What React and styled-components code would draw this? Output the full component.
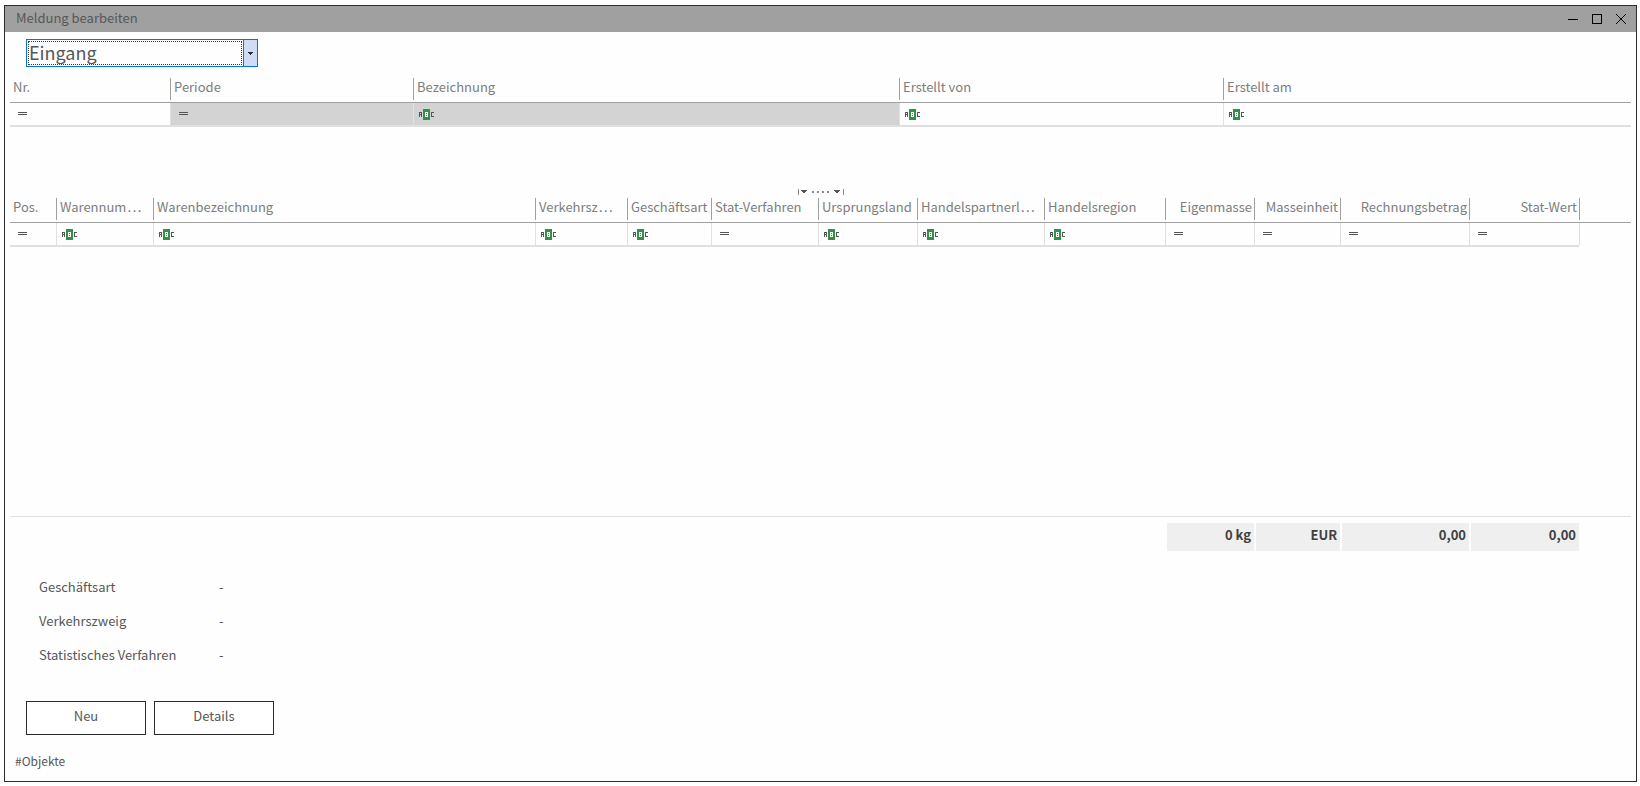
import React, { useState } from 'react';
import styled, { createGlobalStyle } from 'styled-components';

const GlobalStyle = createGlobalStyle`
  * {
    box-sizing: border-box;
  }

  html,
  body,
  #root {
    height: 100%;
    margin: 0;
  }

  body {
    background: #ffffff;
    color: #575757;
    font-family: 'Noto Sans CJK SC', 'Noto Sans', sans-serif;
    font-size: 13px;
    line-height: 20px;
  }
`;

const Screen = styled.div`
  display: flex;
  height: 100%;
  padding: 5px 3px 4px 4px;
`;

const Window = styled.main`
  display: flex;
  flex-direction: column;
  flex: 1;
  min-width: 0;
  border: 1px solid #2b2b30;
  background: #fefefe;
`;

const TitleBar = styled.header`
  display: flex;
  align-items: center;
  justify-content: space-between;
  height: 26px;
  padding: 0 9px 0 11px;
  background: #a0a0a0;
`;

const Title = styled.h1`
  margin: 0;
  padding-bottom: 2px;
  color: #575757;
  font-size: 13px;
  font-weight: 400;
`;

const WindowButtons = styled.div`
  display: flex;
  gap: 12px;
`;

const WindowButton = styled.button`
  display: flex;
  padding: 0;
  border: 0;
  background: none;
  color: #000000;
`;

const Toolbar = styled.div`
  display: flex;
  padding: 7px 21px 11px;
`;

const SelectBox = styled.div`
  display: flex;
  width: 232px;
  height: 28px;
  border: 1px solid #0078d7;
`;

const Select = styled.select`
  flex: 1;
  appearance: none;
  margin: 0;
  padding: 0 16px 2px 2px;
  border: 0;
  border-radius: 0;
  outline: 1px dotted #404040;
  outline-offset: -2px;
  background: transparent;
  color: #575757;
  font-family: inherit;
  font-size: 18px;
  line-height: 24px;
`;

const SelectArrow = styled.span`
  display: flex;
  align-items: center;
  justify-content: center;
  width: 14px;
  border-left: 1px solid #0078d7;
  background: #cfdcf5;
  pointer-events: none;
`;

const Grid = styled.section`
  display: flex;
  flex-direction: column;
  flex: ${({ $grow }) => ($grow ? 1 : 'none')};
  min-height: 0;
  margin: 0 5px;
`;

const Table = styled.table`
  width: 100%;
  table-layout: fixed;
  border-collapse: separate;
  border-spacing: 0;
`;

const HeadCell = styled.th`
  height: 25px;
  padding: 0 0 2px;
  border-bottom: 1px solid #a0a0a0;
  color: #7d7d7d;
  font-weight: 400;
  text-align: ${({ $align }) => $align || 'left'};
`;

const HeadLabel = styled.div`
  height: 22px;
  padding: 0 2px 0 3px;
  border-left: ${({ $first }) => ($first ? 'none' : '1px solid #a0a0a0')};
  line-height: 18px;
  overflow: hidden;
  white-space: nowrap;
`;

// dots on the baseline, the CJK face centres them
const Ellipsis = styled.span`
  font-family: 'Liberation Sans', sans-serif;
  font-size: 16px;
  line-height: 1;
`;

const FilterCell = styled.td`
  height: 24px;
  padding: 0 0 0 ${({ $kind }) => ($kind === 'abc' ? '5px' : '8px')};
  border-left: ${({ $first }) => ($first ? 'none' : '1px solid #e0e0e0')};
  border-bottom: 2px solid #e0e0e0;
  background: ${({ $locked }) => ($locked ? '#d3d3d3' : 'transparent')};
  background-clip: padding-box;

  &:empty {
    padding: 0;
    border-bottom-color: transparent;
  }

  svg {
    display: block;
  }
`;

const Splitter = styled.div`
  display: flex;
  justify-content: center;
  height: 71px;
  padding-top: 62px;
`;

const GridBody = styled.div`
  flex: 1;
  border-bottom: 1px solid #e0e0e0;
`;

const TotalCell = styled.td`
  height: 28px;
  padding: 0 3px 4px 0;
  border-left: 2px solid transparent;
  background: ${({ $filled }) => ($filled ? '#efefef' : 'transparent')};
  background-clip: padding-box;
  color: #404040;
  font-weight: 700;
  text-align: right;
`;

const Totals = styled.div`
  padding-top: 6px;
`;

const Details = styled.dl`
  display: grid;
  grid-template-columns: 180px 1fr;
  row-gap: 14px;
  margin: 0;
  padding: 26px 34px 0;
`;

const Term = styled.dt`
  margin: 0;
`;

const Value = styled.dd`
  margin: 0;
`;

const Actions = styled.div`
  display: flex;
  gap: 8px;
  padding: 36px 21px 0;
`;

const Button = styled.button`
  width: 120px;
  height: 34px;
  padding: 0 0 4px;
  border: 1px solid #2b2b2b;
  background: #ffffff;
  color: #575757;
  font: inherit;
`;

const StatusBar = styled.footer`
  padding: 16px 10px 10px;
  font-size: 12px;
`;

const reportColumns = [
  { label: 'Nr.', width: 160, filter: 'equals' },
  { label: 'Periode', width: 243, filter: 'equals', locked: true },
  { label: 'Bezeichnung', width: 486, filter: 'abc', locked: true },
  { label: 'Erstellt von', width: 324, filter: 'abc' },
  { label: 'Erstellt am', filter: 'abc' },
];

const positionColumns = [
  { label: 'Pos.', width: 46, filter: 'equals' },
  { label: 'Warennum', cut: true, width: 97, filter: 'abc' },
  { label: 'Warenbezeichnung', width: 382, filter: 'abc' },
  { label: 'Verkehrsz', cut: true, width: 92, filter: 'abc' },
  { label: 'Geschäftsart', width: 84, filter: 'abc' },
  { label: 'Stat-Verfahren', width: 107, filter: 'equals' },
  { label: 'Ursprungsland', width: 99, filter: 'abc' },
  { label: 'Handelspartnerl', cut: true, width: 127, filter: 'abc' },
  { label: 'Handelsregion', width: 121, filter: 'abc' },
  { label: 'Eigenmasse', width: 89, filter: 'equals', align: 'right', total: '0 kg' },
  { label: 'Masseinheit', width: 86, filter: 'equals', align: 'right', total: 'EUR' },
  { label: 'Rechnungsbetrag', width: 129, filter: 'equals', align: 'right', total: '0,00' },
  { label: 'Stat-Wert', width: 110, filter: 'equals', align: 'right', total: '0,00' },
  { label: '' },
];

const details = ['Geschäftsart', 'Verkehrszweig', 'Statistisches Verfahren'];

const EqualsIcon = () => (
  <svg width="9" height="4" viewBox="0 0 9 4" shapeRendering="crispEdges" aria-hidden="true">
    <path d="M0 0h9v1H0zM0 2h9v1H0z" fill="#555555" />
  </svg>
);

const AbcIcon = () => (
  <svg width="16" height="11" viewBox="0 0 16 11" shapeRendering="crispEdges" aria-hidden="true">
    <path d="M0 3h3v5h-1v-2h-1v2h-1zM1 4v1h1v-1z" fill="#555555" fillRule="evenodd" />
    <rect x="4" width="7" height="11" fill="#2f9247" />
    <path d="M6 3h3v5h-3zM7 4v1h1v-1zM7 6v1h1v-1z" fill="#ffffff" fillRule="evenodd" />
    <path d="M12 3h3v1h-2v3h2v1h-3z" fill="#555555" />
  </svg>
);

const SplitterIcon = () => (
  <svg width="46" height="6" viewBox="0 0 46 6" shapeRendering="crispEdges" aria-hidden="true">
    <path d="M0 0h1v6H0zM45 0h1v6h-1z" fill="#8a8a8a" />
    <path d="M3 1h6v1h-1v1h-1v1h-2v-1h-1v-1h-1zM36 1h6v1h-1v1h-1v1h-2v-1h-1v-1h-1z" fill="#555555" />
    <path d="M14 2h2v2h-2zM19 2h2v2h-2zM24 2h2v2h-2zM29 2h2v2h-2z" fill="#8a8a8a" />
  </svg>
);

const Columns = ({ columns }) => (
  <colgroup>
    {columns.map(({ label, width }) => (
      <col key={label} width={width} />
    ))}
  </colgroup>
);

const FilterTable = ({ columns, label }) => (
  <Table aria-label={label}>
    <Columns columns={columns} />
    <thead>
      <tr>
        {columns.map((column, i) => (
          <HeadCell key={column.label} $align={column.align}>
            <HeadLabel $first={i === 0}>
              {column.label}
              {column.cut && <Ellipsis>…</Ellipsis>}
            </HeadLabel>
          </HeadCell>
        ))}
      </tr>
    </thead>
    <tbody>
      <tr>
        {columns.map((column, i) => (
          <FilterCell key={column.label} $first={i === 0} $kind={column.filter} $locked={column.locked}>
            {column.filter === 'abc' && <AbcIcon />}
            {column.filter === 'equals' && <EqualsIcon />}
          </FilterCell>
        ))}
      </tr>
    </tbody>
  </Table>
);

const App = () => {
  const [direction, setDirection] = useState('Eingang');

  return (
    <Screen>
      <GlobalStyle />
      <Window>
        <TitleBar>
          <Title>Meldung bearbeiten</Title>
          <WindowButtons>
            <WindowButton aria-label="Minimieren">
              <svg width="12" height="12" shapeRendering="crispEdges">
                <path d="M1 6h10v1H1z" />
              </svg>
            </WindowButton>
            <WindowButton aria-label="Maximieren">
              <svg width="12" height="12" shapeRendering="crispEdges">
                <path d="M1.500 1.500h9v9h-9z" fill="none" stroke="currentColor" />
              </svg>
            </WindowButton>
            <WindowButton aria-label="Schließen">
              <svg width="12" height="12">
                <path d="M1 1l10 10M11 1l-10 10" fill="none" stroke="currentColor" />
              </svg>
            </WindowButton>
          </WindowButtons>
        </TitleBar>

        <Toolbar>
          <SelectBox>
            <Select aria-label="Richtung" value={direction} onChange={(e) => setDirection(e.target.value)}>
              <option>Eingang</option>
              <option>Versendung</option>
            </Select>
            <SelectArrow>
              <svg width="5" height="3" shapeRendering="crispEdges">
                <path d="M0 0h5v1h-1v1h-1v1h-1v-1h-1v-1h-1z" fill="#2b2b2b" />
              </svg>
            </SelectArrow>
          </SelectBox>
        </Toolbar>

        <Grid>
          <FilterTable columns={reportColumns} label="Meldungen" />
        </Grid>

        <Splitter role="separator">
          <SplitterIcon />
        </Splitter>

        <Grid $grow>
          <FilterTable columns={positionColumns} label="Positionen" />
          <GridBody />
          <Totals>
            <Table aria-label="Summen">
              <Columns columns={positionColumns} />
              <tbody>
                <tr>
                  {positionColumns.map((column) => (
                    <TotalCell key={column.label} $filled={column.total}>
                      {column.total}
                    </TotalCell>
                  ))}
                </tr>
              </tbody>
            </Table>
          </Totals>
        </Grid>

        <Details>
          {details.map((name) => (
            <React.Fragment key={name}>
              <Term>{name}</Term>
              <Value>-</Value>
            </React.Fragment>
          ))}
        </Details>

        <Actions>
          <Button type="button">Neu</Button>
          <Button type="button">Details</Button>
        </Actions>

        <StatusBar>#Objekte</StatusBar>
      </Window>
    </Screen>
  );
};

export default App;
